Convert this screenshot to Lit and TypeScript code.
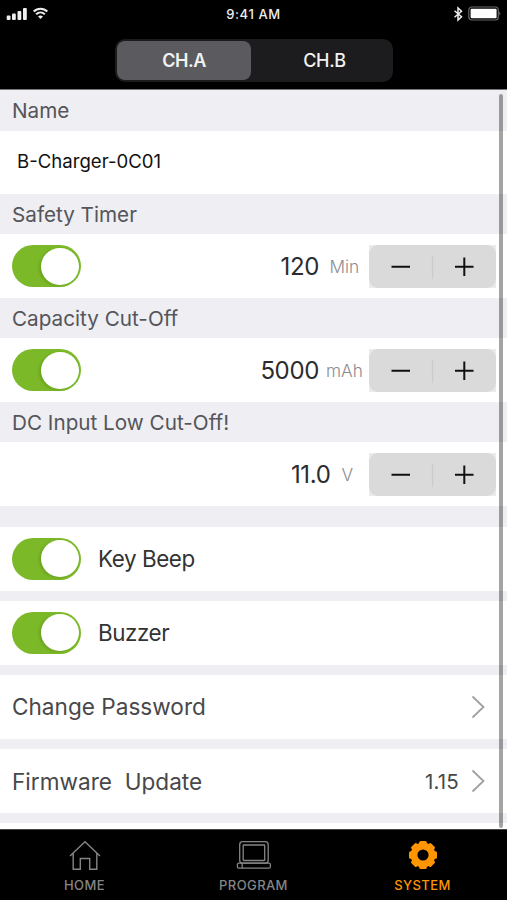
import { LitElement, html, css, svg, nothing } from "lit";
import { customElement } from "lit/decorators.js";

@customElement("toggle-switch")
class ToggleSwitch extends LitElement {
  static styles = css`
    :host { display: block; flex: none; width: 69px; height: 42px; }
    .track { box-sizing: border-box; height: 42px; padding: 2.5px; border-radius: 21px; background: #7cb928; display: flex; justify-content: flex-end; }
    .knob { width: 37.500px; height: 37px; border-radius: 50%; background: #fff; box-shadow: -2px 1px 3px rgba(40, 80, 0, 0.2); }
  `;
  render() {
    return html`<div class="track"><div class="knob"></div></div>`;
  }
}

@customElement("value-stepper")
class ValueStepper extends LitElement {
  static styles = css`
    :host { display: block; flex: none; width: 127px; height: 43px; background: #ebebeb; }
    .body { height: 43px; border-radius: 9px; background: #dadada; }
    svg { display: block; }
  `;
  render() {
    return html`<div class="body"><svg width="127" height="43" viewBox="0 0 127 43" fill="none">
      <path d="M22.500 21.800H41M86 21.800H104.500M95.300 12.500V31" stroke="#111" stroke-width="2" />
      <path d="M63.500 11V34" stroke="#cbcbcb" stroke-width="1.200" />
    </svg></div>`;
  }
}

@customElement("app-root")
class AppRoot extends LitElement {
  static styles = css`
    :host { display: flex; flex-direction: column; position: relative; width: 507px; height: 900px; overflow: hidden; background: #000; font-family: Inter, "Liberation Sans", sans-serif; color: #333; }
    .status { display: grid; grid-template-columns: 1fr auto 1fr; align-items: center; height: 27px; padding: 0 6px; color: #eee; }
    .status svg { display: block; }
    .time { font-size: 13px; font-weight: 500; letter-spacing: 0.6px; }
    .right { justify-self: end; }
    .nav { height: 63px; box-sizing: border-box; padding-top: 12px; display: flex; justify-content: center; border-bottom: 1px solid #77777a; }
    .segments { display: flex; box-sizing: border-box; width: 278px; height: 43px; padding: 2px; border-radius: 10px; background: #1c1c1e; margin-left: 1px; }
    .seg { flex: 1; display: flex; align-items: center; justify-content: center; padding: 0 0 0 7px; border-radius: 8px; color: #f2f2f2; font-size: 18px; font-weight: 500; letter-spacing: -0.3px; }
    .seg.on { flex: 0 0 134px; box-sizing: border-box; padding-left: 0; background: #5b5b5f; font-weight: 600; letter-spacing: -0.5px; }
    .list { flex: none; height: 739px; background: #fff; overflow: hidden; }
    .head { display: flex; align-items: center; box-sizing: border-box; height: 40.300px; padding: 0 0 0 12px; background: #eeeef3; color: #55555a; font-size: 20.700px; white-space: pre; }
    .head.first { height: 40.600px; padding-top: 1px; }
    .row { display: flex; align-items: center; box-sizing: border-box; height: 63.600px; padding: 0 11px 0 12px; background: #fff; white-space: pre; }
    .name { padding: 0 0 2px 5px; font-size: 18.600px; color: #111; }
    .amount { margin-left: auto; font-size: 24px; letter-spacing: -0.35px; color: #2c2c2e; }
    .unit { box-sizing: border-box; font-size: 17.300px; color: #8c8c90; font-weight: 350; }
    .unit.min { width: 50px; padding-left: 10.500px; }
    .unit.mah { width: 50px; padding-left: 7px; }
    .unit.v { width: 38.500px; padding-left: 11px; }
    .gap { height: 10.500px; background: #eeeef3; }
    .gap.tall { height: 21.100px; }
    .label { margin-left: 17px; font-size: 22.400px; letter-spacing: -0.42px; color: #333; }
    .link { font-size: 22.600px; color: #48484a; }
    .version { margin-left: auto; font-size: 20.500px; letter-spacing: 0.2px; color: #48484a; margin-right: 12px; }
    .chev { margin-left: auto; margin-right: 11px; flex: none; }
    .version + .chev { margin-left: 0; }
    .bar { position: absolute; right: 4px; top: 94px; width: 4px; height: 734px; border-radius: 2px; background: rgba(0, 0, 0, 0.36); }
    .tabs { flex: 1; display: grid; grid-template-columns: repeat(3, 1fr); background: #000; border-top: 1px solid #444; box-sizing: border-box; }
    .tab { display: flex; flex-direction: column; align-items: center; padding-top: 7px; color: #858585; font-size: 13px; font-weight: 500; letter-spacing: 0.4px; }
    .tab svg { display: block; margin-bottom: 3px; }
    .tab.on { color: #ff9500; }
  `;

  private stepRow(on: boolean, value: string, unit: string) {
    return html`<div class="row">${on ? html`<toggle-switch></toggle-switch>` : nothing}<span class="amount">${value}</span><span class="unit ${unit.toLowerCase()}">${unit}</span><value-stepper></value-stepper></div>`;
  }

  private chevron() {
    return html`<svg class="chev" width="14" height="24" viewBox="0 0 14 24" fill="none"><path d="M1.500 1.500L12.500 12L1.500 22.500" stroke="#a0a0a2" stroke-width="1.800" /></svg>`;
  }

  private gear() {
    const teeth = [0, 45, 90, 135, 180, 225, 270, 315].map(
      (a) => svg`<rect x="14.200" y="4" width="7.600" height="8" rx="1.500" transform="rotate(${a} 18 18)" />`
    );
    return html`<svg width="36" height="37" viewBox="0 0 36 37" fill="#ff9500">${teeth}<circle cx="18" cy="18" r="9" fill="none" stroke="#ff9500" stroke-width="6.800" /></svg>`;
  }

  render() {
    return html`
      <div class="status">
        <svg width="44" height="14" viewBox="0 0 44 14" fill="#eee">
          <rect x="0.700" y="8.500" width="3.800" height="4.500" rx="1" /><rect x="6" y="6.500" width="3.800" height="6.500" rx="1" /><rect x="11.500" y="4" width="3.800" height="9" rx="1" /><rect x="17" y="1" width="3.800" height="12" rx="1" />
          <path d="M27.700 4.500C31.500 0.700 37.500 0.700 41.300 4.500M30.200 7.300C32.700 4.900 36.300 4.900 38.800 7.300" fill="none" stroke="#eee" stroke-width="2" />
          <path d="M32 9.400Q34.500 7.600 37 9.400L34.500 11.900Z" />
        </svg>
        <span class="time">9:41 AM</span>
        <svg class="right" width="48" height="16" viewBox="0 0 48 16" fill="none">
          <path d="M1.500 4.700L8.500 10.800L5 14V2L8.500 5.200L1.500 11.300" stroke="#eee" stroke-width="1.500" />
          <rect x="15.800" y="1" width="29.500" height="13" rx="3" stroke="#6a6a6a" stroke-width="1.200" />
          <rect x="17.600" y="2.700" width="26" height="9.600" rx="1" fill="#fff" />
          <path d="M46.300 5.500Q48.300 7.500 46.300 9.500Z" fill="#777" />
        </svg>
      </div>
      <div class="nav"><div class="segments"><div class="seg on">CH.A</div><div class="seg">CH.B</div></div></div>
      <div class="list">
        <div class="head first">Name</div>
        <div class="row"><span class="name">B-Charger-0C01</span></div>
        <div class="head">Safety Timer</div>
        ${this.stepRow(true, "120", "Min")}
        <div class="head">Capacity Cut-Off</div>
        ${this.stepRow(true, "5000", "mAh")}
        <div class="head">DC Input Low Cut-Off!</div>
        ${this.stepRow(false, "11.0", "V")}
        <div class="gap tall"></div>
        <div class="row"><toggle-switch></toggle-switch><span class="label">Key Beep</span></div>
        <div class="gap"></div>
        <div class="row"><toggle-switch></toggle-switch><span class="label">Buzzer</span></div>
        <div class="gap"></div>
        <div class="row"><span class="link">Change Password</span>${this.chevron()}</div>
        <div class="gap"></div>
        <div class="row"><span class="link">Firmware  Update</span><span class="version">1.15</span>${this.chevron()}</div>
        <div class="gap"></div>
      </div>
      <div class="bar"></div>
      <div class="tabs">
        <div class="tab">
          <svg width="32" height="37" viewBox="0 0 32 37" fill="none" stroke="#858585" stroke-width="1.400"><path d="M1 19L16 4.700L31 19M4.200 16.500V32.300H11.300V21.500H20.700V32.300H27.800V16.500" /></svg>HOME
        </div>
        <div class="tab">
          <svg width="36" height="37" viewBox="0 0 36 37" fill="none" stroke="#858585" stroke-width="1.300"><rect x="3.700" y="4.700" width="28.500" height="21.500" rx="3" /><rect x="7.200" y="8" width="21.500" height="15.500" rx="0.500" /><rect x="1.400" y="26.200" width="33" height="5" rx="1.500" /><path d="M6.200 26.200V31.200" /></svg>PROGRAM
        </div>
        <div class="tab on">${this.gear()}SYSTEM</div>
      </div>
    `;
  }
}
